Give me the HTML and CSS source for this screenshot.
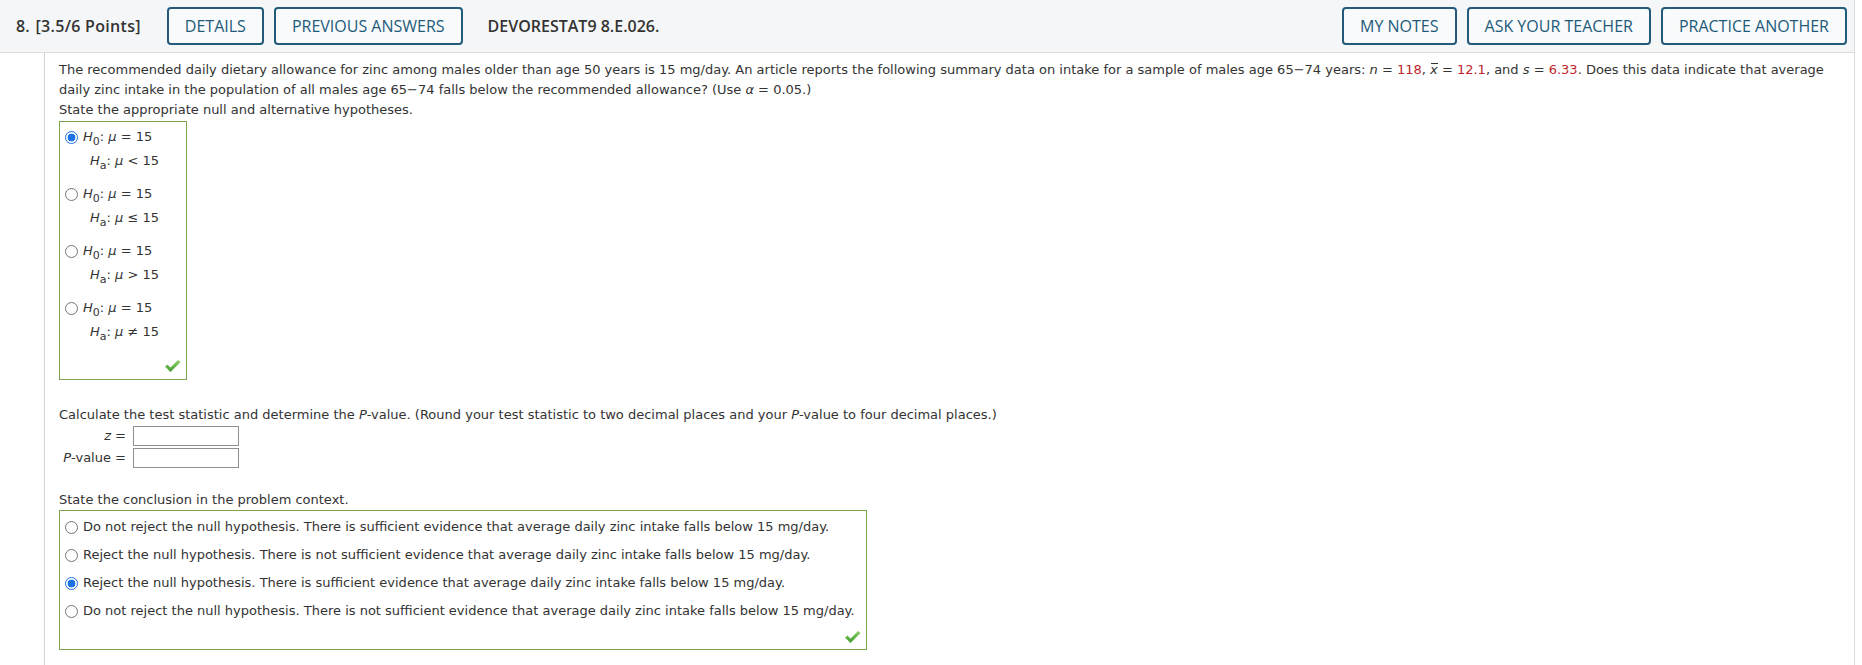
FILE: index.html
```html
<!DOCTYPE html>
<html>
<head>
<meta charset="utf-8">
<link rel="stylesheet" href="styles.css">
</head>
<body>
<div class="question">
  <div class="qhead">
    <span class="qnum">8.</span>
    <span class="qpts">[3.5/6 Points]</span>
    <span class="btn">DETAILS</span>
    <span class="btn">PREVIOUS ANSWERS</span>
    <span class="qcode">DEVORESTAT9 8.E.026.</span>
    <span class="spacer"></span>
    <span class="btn">MY NOTES</span>
    <span class="btn">ASK YOUR TEACHER</span>
    <span class="btn">PRACTICE ANOTHER</span>
  </div>
  <div class="qbody">
    <p class="txt">The recommended daily dietary allowance for zinc among males older than age 50 years is 15 mg/day. An article reports the following summary data on intake for a sample of males age 65&minus;74 years: <i>n</i> = <span class="red">118</span>, <span class="xbar"><i>x</i></span> = <span class="red">12.1</span>, and <i>s</i> = <span class="red">6.33</span>. Does this data indicate that average daily zinc intake in the population of all males age 65&minus;74 falls below the recommended allowance? (Use <i>&alpha;</i> = 0.05.)</p>
    <p class="txt">State the appropriate null and alternative hypotheses.</p>

    <div class="box hyp">
      <div class="hopt">
        <div class="hrow"><span class="radio on"></span><span><i>H</i><sub>0</sub>: <i>&mu;</i> = 15</span></div>
        <div class="hrow alt"><span><i>H</i><sub>a</sub>: <i>&mu;</i> &lt; 15</span></div>
      </div>
      <div class="hopt">
        <div class="hrow"><span class="radio"></span><span><i>H</i><sub>0</sub>: <i>&mu;</i> = 15</span></div>
        <div class="hrow alt"><span><i>H</i><sub>a</sub>: <i>&mu;</i> &le; 15</span></div>
      </div>
      <div class="hopt">
        <div class="hrow"><span class="radio"></span><span><i>H</i><sub>0</sub>: <i>&mu;</i> = 15</span></div>
        <div class="hrow alt"><span><i>H</i><sub>a</sub>: <i>&mu;</i> &gt; 15</span></div>
      </div>
      <div class="hopt">
        <div class="hrow"><span class="radio"></span><span><i>H</i><sub>0</sub>: <i>&mu;</i> = 15</span></div>
        <div class="hrow alt"><span><i>H</i><sub>a</sub>: <i>&mu;</i> &ne; 15</span></div>
      </div>
      <div class="checkrow">
        <svg class="check" width="17" height="14" viewBox="0 0 17 14"><defs><linearGradient id="g1" x1="0" y1="0" x2="0" y2="1"><stop offset="0" stop-color="#8fd16a"/><stop offset="1" stop-color="#3d9a2e"/></linearGradient></defs><path d="M1 7.5 L3.5 5.5 L6.5 8.5 L14 1 L16.5 3 L6.5 13 Z" fill="url(#g1)"/></svg>
      </div>
    </div>

    <p class="txt calc">Calculate the test statistic and determine the <i>P</i>-value. (Round your test statistic to two decimal places and your <i>P</i>-value to four decimal places.)</p>
    <div class="fields">
      <span class="lbl"><i>z</i> =</span><span class="inp"></span>
      <span class="lbl"><i>P</i>-value =</span><span class="inp"></span>
    </div>

    <p class="txt concl">State the conclusion in the problem context.</p>
    <div class="box conc">
      <div class="crow"><span class="radio"></span><span>Do not reject the null hypothesis. There is sufficient evidence that average daily zinc intake falls below 15 mg/day.</span></div>
      <div class="crow"><span class="radio"></span><span>Reject the null hypothesis. There is not sufficient evidence that average daily zinc intake falls below 15 mg/day.</span></div>
      <div class="crow"><span class="radio on"></span><span>Reject the null hypothesis. There is sufficient evidence that average daily zinc intake falls below 15 mg/day.</span></div>
      <div class="crow"><span class="radio"></span><span>Do not reject the null hypothesis. There is not sufficient evidence that average daily zinc intake falls below 15 mg/day.</span></div>
      <div class="checkrow">
        <svg class="check" width="17" height="14" viewBox="0 0 17 14"><defs><linearGradient id="g2" x1="0" y1="0" x2="0" y2="1"><stop offset="0" stop-color="#8fd16a"/><stop offset="1" stop-color="#3d9a2e"/></linearGradient></defs><path d="M1 7.5 L3.5 5.5 L6.5 8.5 L14 1 L16.5 3 L6.5 13 Z" fill="url(#g2)"/></svg>
      </div>
    </div>
  </div>
</div>
</body>
</html>
```

FILE: styles.css
```css
html, body {
  margin: 0;
  padding: 0;
  background: #fff;
}
.question {
  width: 1854px;
  border-right: 1px solid #ddd;
  min-height: 665px;
}
.qhead {
  display: flex;
  align-items: center;
  height: 53px;
  background: #f5f6f7;
  border-bottom: 1px solid #dcdcdc;
  font-family: "Open Sans", "Noto Sans", sans-serif;
  font-size: 16px;
  font-weight: 600;
  color: #333;
  padding-left: 16px;
  padding-right: 7px;
  box-sizing: border-box;
}
.qnum { margin-right: 6px; }
.qpts { margin-right: 26px; letter-spacing: 0.3px; }
.btn {
  display: inline-flex;
  align-items: center;
  justify-content: center;
  height: 38px;
  box-sizing: border-box;
  border: 2px solid #225b7a;
  border-radius: 4px;
  padding: 0 16px;
  color: #225b7a;
  font-weight: 400;
  margin-right: 10px;
  background: #f9fafb;
}
.qcode { margin-left: 15px; }
.spacer { flex: 1; }
.qhead .btn:last-child { margin-right: 0; }

.qbody {
  margin-left: 44px;
  border-left: 1px solid #d4d4d4;
  padding: 7px 10px 20px 14px;
  font-family: "DejaVu Sans", Verdana, sans-serif;
  font-size: 13px;
  color: #333;
  line-height: 20px;
}
.txt { margin: 0; }
.red { color: #c0262d; }
.xbar { position: relative; }
.xbar::before {
  content: "";
  position: absolute;
  left: 1px;
  right: 0;
  top: 1px;
  height: 1px;
  background: #333;
}
sub {
  font-size: 11px;
  line-height: 0;
  vertical-align: -4px;
}
.box {
  border: 1px solid #7da34f;
  box-sizing: border-box;
}
.hyp {
  width: 128px;
  margin-top: 1px;
  padding: 3px 0 0 5px;
}
.hopt { height: 57px; }
.hrow {
  display: flex;
  align-items: center;
  height: 24px;
  white-space: nowrap;
}
.hrow.alt { padding-left: 25px; }
.radio {
  display: inline-block;
  width: 13px;
  height: 13px;
  box-sizing: border-box;
  border: 1px solid #767676;
  border-radius: 50%;
  margin-right: 5px;
  flex: none;
  background: #fff;
}
.radio.on {
  border: 1px solid #1a73e8;
  background: radial-gradient(circle, #1a73e8 0 3.6px, #fff 4.2px);
}
.checkrow {
  display: flex;
  justify-content: flex-end;
  padding-right: 5px;
  height: 26px;
  align-items: center;
}
.conc .checkrow { height: 24px; }
.calc { margin-top: 25px; }
.fields {
  display: grid;
  grid-template-columns: 67px 106px;
  column-gap: 7px;
  row-gap: 2px;
  margin-top: 1px;
}
.lbl { text-align: right; line-height: 20px; }
.inp {
  height: 20px;
  box-sizing: border-box;
  border: 1px solid #8f8f8f;
  background: #fff;
}
.concl { margin-top: 22px; }
.conc {
  width: 808px;
  padding: 2px 0 0 5px;
}
.crow {
  display: flex;
  align-items: center;
  height: 28px;
  white-space: nowrap;
}
```
